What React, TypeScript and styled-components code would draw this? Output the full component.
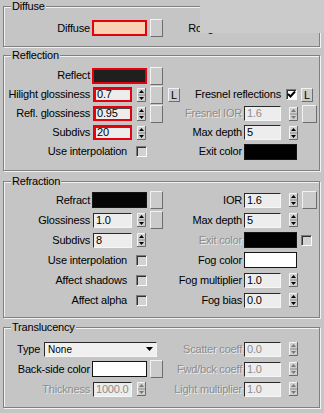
import styled, { createGlobalStyle, css } from "styled-components";

const BG = "#c5c5c5";

const GlobalStyle = createGlobalStyle`
  html, body { margin: 0; padding: 0; background: ${BG}; }
  body {
    font-family: "Liberation Sans", Arial, sans-serif;
    font-size: 11px;
    letter-spacing: -0.2px;
    color: #000;
  }
  * { box-sizing: border-box; }
`;

const muted = css`
  color: #8c8c8c;
  text-shadow: 1px 1px 0 #ececec;
`;

const Page = styled.div`
  position: relative;
  width: 324px;
  height: 413px;
  overflow: hidden;
  padding-left: 3px;
`;

// the screenshot has a lighter patch pasted over the top right corner
const Cover = styled.div`
  position: absolute;
  top: 0;
  right: 0;
  width: 124px;
  height: 33px;
  background: #cbcbcb;
`;

const Group = styled.fieldset<{ $mt: number; $pt: number; $pb: number }>`
  width: 317px;
  min-width: 0;
  margin: ${(p) => p.$mt}px 0 0 0;
  padding: ${(p) => p.$pt}px 0 ${(p) => p.$pb}px 0;
  border: 1px solid #808080;
  box-shadow: inset 1px 1px 0 #f2f2f2, 1px 1px 0 #f2f2f2;
`;

const Legend = styled.legend`
  margin-left: 7px;
  padding: 0 1px;
  height: 12px;
  line-height: 12px;
  background: ${BG};
`;

const Row = styled.div<{ $h: number }>`
  display: flex;
  align-items: center;
  height: ${(p) => p.$h}px;
`;

const Left = styled.div<{ $pl?: number }>`
  width: 181px;
  flex-shrink: 0;
  display: flex;
  align-items: center;
  padding-left: ${(p) => p.$pl ?? 0}px;
`;

const Right = styled.div`
  flex: 1;
  min-width: 0;
  display: flex;
  justify-content: flex-end;
  align-items: center;
  padding-right: 2px;
`;

const Label = styled.span<{ $w?: number; $gap?: number; $off?: boolean }>`
  flex-shrink: 0;
  width: ${(p) => (p.$w ? `${p.$w}px` : "auto")};
  margin-right: ${(p) => p.$gap ?? 2}px;
  text-align: right;
  white-space: nowrap;
  line-height: 13px;
  ${(p) => p.$off && muted}
`;

const Ctrl = styled.div<{ $w: number }>`
  width: ${(p) => p.$w}px;
  flex-shrink: 0;
  display: flex;
  align-items: center;
`;

const Swatch = styled.div<{ $c: string; $w: number; $red?: boolean }>`
  width: ${(p) => p.$w}px;
  height: 16px;
  flex-shrink: 0;
  background: ${(p) => p.$c};
  border: ${(p) => (p.$red ? "2px solid #e4000c" : "1px solid #151515")};
`;

const Field = styled.div<{ $w: number; $red?: boolean; $off?: boolean; $ml?: number }>`
  width: ${(p) => p.$w}px;
  height: 15px;
  margin-left: ${(p) => p.$ml ?? 0}px;
  flex-shrink: 0;
  padding-left: 2px;
  overflow: hidden;
  white-space: nowrap;
  line-height: 12px;
  background: #ededed;
  border: 1px solid;
  border-color: #2a2a2a #f6f6f6 #f6f6f6 #2a2a2a;
  ${(p) =>
    p.$red &&
    css`
      border: 2px solid #e4000c;
      box-shadow: inset 1px 1px 0 #4a4a4a;
      line-height: 11px;
    `}
  ${(p) => p.$off && muted}
`;

const MapBtn = styled.div<{ $w: number; $ml: number }>`
  width: ${(p) => p.$w}px;
  height: 18px;
  margin-left: ${(p) => p.$ml}px;
  flex-shrink: 0;
  background: #cbcbcb;
  border: 1px solid;
  border-color: #f2f2f2 #6e6e6e #6e6e6e #f2f2f2;
`;

const LBtn = styled.div<{ $ml: number }>`
  width: 12px;
  height: 14px;
  margin-left: ${(p) => p.$ml}px;
  flex-shrink: 0;
  background: #cbcbcb;
  border: 1px solid;
  border-color: #f2f2f2 #6e6e6e #6e6e6e #f2f2f2;
  text-align: center;
  line-height: 12px;
  letter-spacing: 0;
`;

const Check = styled.div<{ $on?: boolean; $ml?: number }>`
  width: 11px;
  height: 11px;
  margin-left: ${(p) => p.$ml ?? 0}px;
  flex-shrink: 0;
  display: flex;
  align-items: center;
  justify-content: center;
  background: ${(p) => (p.$on ? "#ffffff" : "#d2d2d2")};
  border: 1px solid;
  border-color: #7a7a7a #fafafa #fafafa #7a7a7a;
  box-shadow: inset 1px 1px 0 #303030;
`;

const Select = styled.div`
  width: 113px;
  height: 15px;
  flex-shrink: 0;
  display: flex;
  align-items: center;
  justify-content: space-between;
  padding: 0 3px 0 3px;
  font-size: 10px;
  letter-spacing: 0;
  background: #f0f0f0;
  border: 1px solid;
  border-color: #2a2a2a #f6f6f6 #f6f6f6 #2a2a2a;
`;

const SpinBox = styled.div<{ $ml: number }>`
  width: 9px;
  height: 14px;
  margin-left: ${(p) => p.$ml}px;
  flex-shrink: 0;
  display: flex;
`;

function Spinner({ ml = 5, off = false }: { ml?: number; off?: boolean }) {
  const c = off ? "#7a7a7a" : "#000";
  return (
    <SpinBox $ml={ml}>
      <svg width="9" height="14" viewBox="0 0 9 14">
        <rect x="0" y="0" width="9" height="14" fill="#cfcfcf" />
        <path d="M0 13.5H8.5V0" stroke="#6a6a6a" fill="none" />
        <path d="M0.5 13V0.5H8" stroke="#f4f4f4" fill="none" />
        <path d="M1 7H8" stroke="#8a8a8a" />
        <path d="M4.5 2L7 5H2Z" fill={c} />
        <path d="M2 9H7L4.5 12Z" fill={c} />
      </svg>
    </SpinBox>
  );
}

function Tick() {
  return (
    <svg width="9" height="9" viewBox="0 0 9 9">
      <path d="M1 4L3.5 6.5L8 1.5" stroke="#000" strokeWidth="2" fill="none" />
    </svg>
  );
}

function DropArrow() {
  return (
    <svg width="7" height="4" viewBox="0 0 7 4">
      <path d="M0 0H7L3.5 4Z" fill="#000" />
    </svg>
  );
}

// left half: input + spinner (+ map button, + L)
function LeftSpin({ label, value, red, off, map, l }: { label: string; value: string; red?: boolean; off?: boolean; map?: boolean; l?: boolean }) {
  return (
    <Left>
      <Label $w={86} $off={off}>{label}</Label>
      <Field $w={39} $ml={1} $red={red} $off={off}>{value}</Field>
      <Spinner ml={5} off={off} />
      {map && <MapBtn $w={13} $ml={4} />}
      {l && <LBtn $ml={5}>L</LBtn>}
    </Left>
  );
}

function LeftColor({ label, color, red }: { label: string; color: string; red?: boolean }) {
  return (
    <Left>
      <Label $w={86}>{label}</Label>
      <Swatch $c={color} $w={55} $red={red} />
      <MapBtn $w={13} $ml={3} />
    </Left>
  );
}

function LeftCheck({ label }: { label: string }) {
  return (
    <Left>
      <Label $w={123} $gap={9}>{label}</Label>
      <Check />
    </Left>
  );
}

function RightSpin({ label, value, off, map }: { label: string; value: string; off?: boolean; map?: boolean }) {
  return (
    <Right>
      <Label $off={off}>{label}</Label>
      <Ctrl $w={73}>
        <Field $w={37} $off={off}>{value}</Field>
        <Spinner ml={8} off={off} />
        {map && <MapBtn $w={15} $ml={4} />}
      </Ctrl>
    </Right>
  );
}

function RightColor({ label, color, off, check }: { label: string; color: string; off?: boolean; check?: boolean }) {
  return (
    <Right>
      <Label $off={off}>{label}</Label>
      <Ctrl $w={73}>
        <Swatch $c={color} $w={53} />
        {check && <Check $ml={4} />}
      </Ctrl>
    </Right>
  );
}

export default function App() {
  return (
    <Page>
      <GlobalStyle />

      <Group $mt={0} $pt={7} $pb={9}>
        <Legend>Diffuse</Legend>
        <Row $h={18}>
          <LeftColor label="Diffuse" color="#f9d2b3" red />
          <Right>
            <Label>Roughness</Label>
            <Ctrl $w={73} />
          </Right>
        </Row>
      </Group>

      <Group $mt={2} $pt={5} $pb={9}>
        <Legend>Reflection</Legend>
        <Row $h={19}>
          <LeftColor label="Reflect" color="#1f1f1f" red />
          <Right />
        </Row>
        <Row $h={19}>
          <LeftSpin label="Hilight glossiness" value="0.7" red map l />
          <Right>
            <Label $gap={5}>Fresnel reflections</Label>
            <Ctrl $w={31}>
              <Check $on>
                <Tick />
              </Check>
              <LBtn $ml={4}>L</LBtn>
            </Ctrl>
          </Right>
        </Row>
        <Row $h={19}>
          <LeftSpin label="Refl. glossiness" value="0.95" red map />
          <RightSpin label="Fresnel IOR" value="1.6" off map />
        </Row>
        <Row $h={19}>
          <LeftSpin label="Subdivs" value="20" red />
          <RightSpin label="Max depth" value="5" />
        </Row>
        <Row $h={19}>
          <LeftCheck label="Use interpolation" />
          <RightColor label="Exit color" color="#000000" />
        </Row>
      </Group>

      <Group $mt={4} $pt={3} $pb={7}>
        <Legend>Refraction</Legend>
        <Row $h={20}>
          <LeftColor label="Refract" color="#050505" />
          <RightSpin label="IOR" value="1.6" map />
        </Row>
        <Row $h={20}>
          <LeftSpin label="Glossiness" value="1.0" map />
          <RightSpin label="Max depth" value="5" />
        </Row>
        <Row $h={20}>
          <LeftSpin label="Subdivs" value="8" />
          <RightColor label="Exit color" color="#000000" off check />
        </Row>
        <Row $h={20}>
          <LeftCheck label="Use interpolation" />
          <RightColor label="Fog color" color="#ffffff" />
        </Row>
        <Row $h={20}>
          <LeftCheck label="Affect shadows" />
          <RightSpin label="Fog multiplier" value="1.0" />
        </Row>
        <Row $h={20}>
          <LeftCheck label="Affect alpha" />
          <RightSpin label="Fog bias" value="0.0" />
        </Row>
      </Group>

      <Group $mt={3} $pt={6} $pb={8}>
        <Legend>Translucency</Legend>
        <Row $h={20}>
          <Left $pl={13}>
            <Label $gap={4}>Type</Label>
            <Select>
              <span>None</span>
              <DropArrow />
            </Select>
          </Left>
          <RightSpin label="Scatter coeff" value="0.0" off />
        </Row>
        <Row $h={20}>
          <LeftColor label="Back-side color" color="#ffffff" />
          <RightSpin label="Fwd/bck coeff" value="1.0" off />
        </Row>
        <Row $h={20}>
          <LeftSpin label="Thickness" value="1000.0" off />
          <RightSpin label="Light multiplier" value="1.0" off />
        </Row>
      </Group>

      <Cover />
    </Page>
  );
}
